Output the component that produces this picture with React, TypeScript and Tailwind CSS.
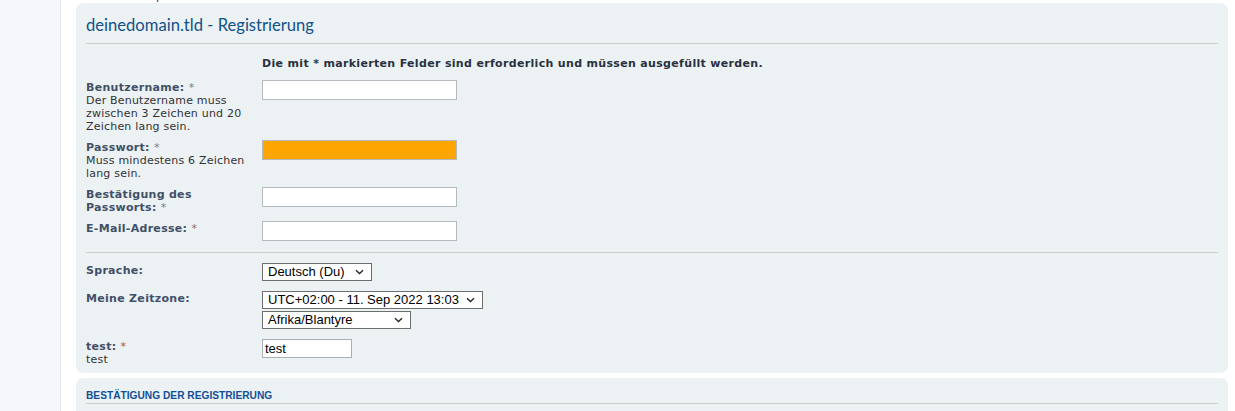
import { ReactNode } from "react"

function Chevron() {
  return (
    <svg width="9" height="6" viewBox="0 0 9 6" className="shrink-0">
      <path d="M1 1.2 L4.5 4.5 L8 1.2" fill="none" stroke="#222" strokeWidth="1.3" />
    </svg>
  )
}

function FakeSelect({ value, width }: { value: string; width: string }) {
  return (
    <div
      className={`${width} flex h-[18px] items-center justify-between border border-[#6e6e6e] bg-white pl-[5px] pr-[7px] font-['Liberation_Sans',Arial,sans-serif] text-[13px] leading-[16px] tracking-normal text-black`}
    >
      <span className="whitespace-nowrap">{value}</span>
      <Chevron />
    </div>
  )
}

function TextBox({ orange }: { orange?: boolean }) {
  return (
    <div
      className={`h-[20px] w-[195px] border border-[#b4bac0] ${orange ? "bg-[#ffa500]" : "bg-white"}`}
    />
  )
}

function Row({ top, label, children }: { top: string; label: ReactNode; children: ReactNode }) {
  return (
    <div className={`flex ${top}`}>
      <div className="w-[176px] shrink-0 pt-[1px]">{label}</div>
      <div className="flex flex-col">{children}</div>
    </div>
  )
}

const lbl = "font-bold tracking-[0.3px] text-[#425067]"
const star = "font-normal text-[#6f8094]"

export default function App() {
  return (
    <div className="flex h-[411px] overflow-hidden bg-white font-['DejaVu_Sans',Verdana,sans-serif] text-[11px] leading-[13px] tracking-[0.2px] text-[#333]">
      <div className="w-[61px] shrink-0 border-r border-[#e3e7eb] bg-[#f5f7fa]" />

      <div className="flex-1 pl-[15px] pr-[7px]">
        <div className="-mt-[10px] h-[13px] text-[#333]">test ohne template</div>

        {/* registration panel */}
        <div className="rounded-[7px] bg-[#ecf1f3] px-[10px] pt-[10px] pb-[7px]">
          <h2 className="border-b border-[#cccccc] pb-[6px] font-['Lato',sans-serif] text-[16.6px] leading-[24px] font-normal tracking-normal text-[#105289]">
            deinedomain.tld - Registrierung
          </h2>

          <div className="mt-[13px] pl-[176px] font-bold tracking-[0.33px] text-[#28313f]">
            Die mit * markierten Felder sind erforderlich und müssen ausgefüllt werden.
          </div>

          <Row
            top="mt-[10px]"
            label={
              <>
                <div className={lbl}>
                  Benutzername: <span className={star}>*</span>
                </div>
                <div className="w-[162px]">Der Benutzername muss zwischen 3 Zeichen und 20 Zeichen lang sein.</div>
              </>
            }
          >
            <TextBox />
          </Row>

          <Row
            top="mt-[7px]"
            label={
              <>
                <div className={lbl}>
                  Passwort: <span className={star}>*</span>
                </div>
                <div className="w-[162px]">Muss mindestens 6 Zeichen lang sein.</div>
              </>
            }
          >
            <TextBox orange />
          </Row>

          <Row
            top="mt-[7px]"
            label={
              <div className={`${lbl} w-[130px]`}>
                Bestätigung des Passworts: <span className={star}>*</span>
              </div>
            }
          >
            <TextBox />
          </Row>

          <Row
            top="mt-[7px]"
            label={
              <div className={lbl}>
                E-Mail-Adresse: <span className="font-normal text-[#a0674c]">*</span>
              </div>
            }
          >
            <TextBox />
          </Row>

          <div className="mt-[11px] border-t border-[#cccccc]" />

          <Row top="mt-[10px]" label={<div className={lbl}>Sprache:</div>}>
            <FakeSelect value="Deutsch (Du)" width="w-[110px]" />
          </Row>

          <Row top="mt-[10px]" label={<div className={lbl}>Meine Zeitzone:</div>}>
            <FakeSelect value="UTC+02:00 - 11. Sep 2022 13:03" width="w-[221px]" />
            <div className="mt-[2px]">
              <FakeSelect value="Afrika/Blantyre" width="w-[149px]" />
            </div>
          </Row>

          <Row
            top="mt-[10px]"
            label={
              <>
                <div className={lbl}>
                  test: <span className="font-normal text-[#b5485a]">*</span>
                </div>
                <div>test</div>
              </>
            }
          >
            <div className="flex h-[19px] w-[90px] items-center border border-[#a9afb6] bg-white pl-[2px] font-['Liberation_Sans',Arial,sans-serif] text-[13px] tracking-normal text-black">
              test
            </div>
          </Row>
        </div>

        {/* confirmation panel */}
        <div className="mt-[5px] rounded-[7px] bg-[#ecf1f3] px-[10px] pt-[11px] pb-[20px]">
          <h3 className="border-b border-[#cccccc] pb-[1px] font-['Liberation_Sans',Arial,sans-serif] text-[10.2px] font-bold uppercase tracking-normal text-[#115098]">
            Bestätigung der Registrierung
          </h3>
        </div>
      </div>
    </div>
  )
}
